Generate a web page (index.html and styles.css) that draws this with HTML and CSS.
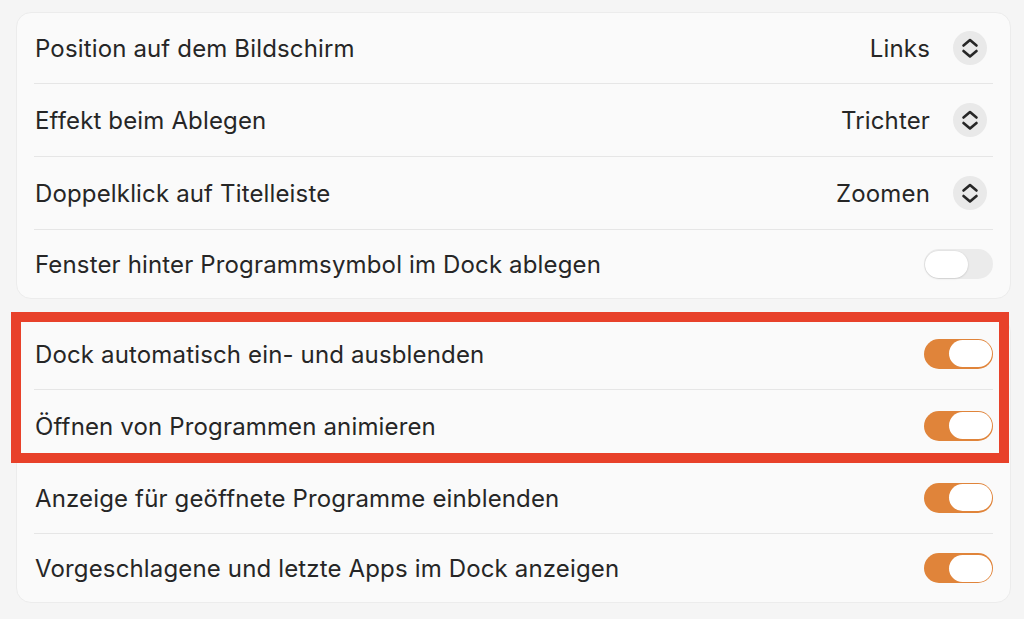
FILE: index.html
```html
<!DOCTYPE html>
<html lang="de">
<head>
<meta charset="utf-8">
<link rel="stylesheet" href="styles.css">
</head>
<body>
<div class="page">
  <div class="card c1">
    <div class="row"><span class="label">Position auf dem Bildschirm</span><span class="ctrl"><span class="value">Links</span><span class="stepper"><svg viewBox="0 0 34 34" width="34" height="34"><path d="M10.5 14.5 L17 9 L23.5 14.5 M10.5 20 L17 25.5 L23.5 20" fill="none" stroke="#262626" stroke-width="2.6" stroke-linecap="round" stroke-linejoin="round"/></svg></span></span></div>
    <div class="row"><span class="label">Effekt beim Ablegen</span><span class="ctrl"><span class="value">Trichter</span><span class="stepper"><svg viewBox="0 0 34 34" width="34" height="34"><path d="M10.5 14.5 L17 9 L23.5 14.5 M10.5 20 L17 25.5 L23.5 20" fill="none" stroke="#262626" stroke-width="2.6" stroke-linecap="round" stroke-linejoin="round"/></svg></span></span></div>
    <div class="row"><span class="label">Doppelklick auf Titelleiste</span><span class="ctrl"><span class="value">Zoomen</span><span class="stepper"><svg viewBox="0 0 34 34" width="34" height="34"><path d="M10.5 14.5 L17 9 L23.5 14.5 M10.5 20 L17 25.5 L23.5 20" fill="none" stroke="#262626" stroke-width="2.6" stroke-linecap="round" stroke-linejoin="round"/></svg></span></span></div>
    <div class="row"><span class="label">Fenster hinter Programmsymbol im Dock ablegen</span><span class="toggle off"><span class="knob"></span></span></div>
  </div>
  <div class="card c2">
    <div class="row"><span class="label">Dock automatisch ein- und ausblenden</span><span class="toggle on"><span class="knob"></span></span></div>
    <div class="row"><span class="label">Öffnen von Programmen animieren</span><span class="toggle on"><span class="knob"></span></span></div>
    <div class="row"><span class="label">Anzeige für geöffnete Programme einblenden</span><span class="toggle on"><span class="knob"></span></span></div>
    <div class="row"><span class="label">Vorgeschlagene und letzte Apps im Dock anzeigen</span><span class="toggle on"><span class="knob"></span></span></div>
  </div>
  <div class="highlight"></div>
</div>
</body>
</html>
```
FILE: styles.css
```css
html, body {
  margin: 0;
  padding: 0;
  background: #f5f5f5;
}
body {
  width: 1024px;
  height: 619px;
  overflow: hidden;
  font-family: Inter, "Liberation Sans", sans-serif;
  color: #262626;
}
.page {
  position: relative;
  padding: 12px 13px 0 16px;
  display: flex;
  flex-direction: column;
  gap: 18px;
}
.card {
  background: #fafafa;
  border: 1px solid #ececec;
  border-radius: 15px;
  display: flex;
  flex-direction: column;
  padding: 0 17px;
}
.row {
  height: 73px;
  display: flex;
  align-items: center;
  justify-content: space-between;
  border-top: 1px solid #e6e6e6;
  box-sizing: border-box;
}
.row:first-child {
  border-top: none;
}
.c1 .row:first-child { height: 70px; }
.c1 .row:last-child { height: 69px; }
.c2 .row { height: 72px; }
.c2 .row:first-child { height: 71px; }
.c2 .row:last-child { height: 69px; }
.label {
  font-size: 24px;
  letter-spacing: 0.15px;
  padding-left: 1px;
  padding-top: 1px;
}
.ctrl {
  display: flex;
  align-items: center;
  gap: 23px;
  padding-right: 6px;
}
.value {
  font-size: 24px;
  letter-spacing: 0.15px;
}
.stepper {
  width: 34px;
  height: 34px;
  border-radius: 50%;
  background: #e9e9e9;
  display: flex;
}
.toggle {
  width: 69px;
  height: 30px;
  border-radius: 15px;
  display: flex;
  align-items: center;
  padding: 0 1px;
  box-sizing: border-box;
}
.toggle.on {
  background: #e0843a;
  justify-content: flex-end;
}
.toggle.off {
  background: #ebebeb;
  justify-content: flex-start;
}
.knob {
  width: 43px;
  height: 27px;
  border-radius: 14px;
  background: #ffffff;
}
.toggle.off .knob {
  box-shadow: 0 0.5px 2px rgba(0,0,0,0.18);
}
.highlight {
  position: absolute;
  left: 11px;
  top: 312px;
  width: 998px;
  height: 151px;
  box-sizing: border-box;
  border: 10px solid #e8412a;
}
```
